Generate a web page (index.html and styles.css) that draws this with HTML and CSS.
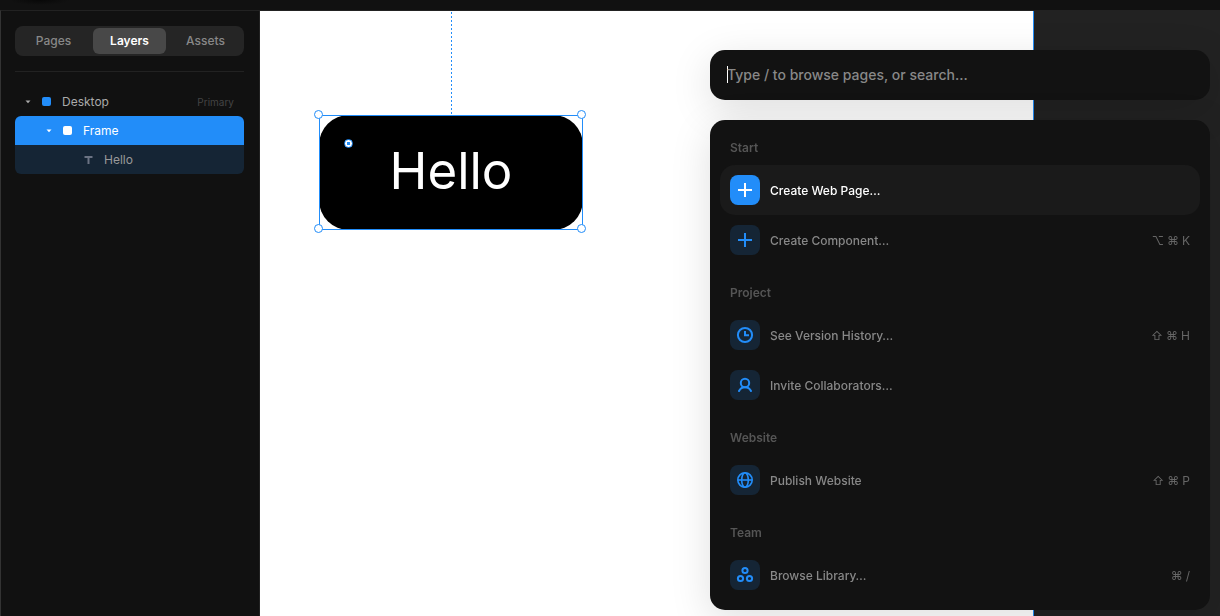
FILE: index.html
```html
<!DOCTYPE html>
<html lang="en">
<head>
<meta charset="utf-8">
<title>Editor</title>
<meta name="viewport" content="width=device-width, initial-scale=1">
<link rel="stylesheet" href="styles.css">
</head>
<body>
<div class="app">
  <header class="toolbar"></header>
  <div class="workspace">
    <aside class="sidebar">
      <nav class="tabs" aria-label="Panels">
        <button class="tab" type="button">Pages</button>
        <button class="tab tab-active" type="button">Layers</button>
        <button class="tab" type="button">Assets</button>
      </nav>
      <ul class="tree">
        <li>
          <button class="layer" type="button">
            <svg class="caret" viewBox="0 0 6 4" aria-hidden="true"><path d="M.5.5h5L3 3.3z"/></svg>
            <span class="swatch"></span>
            <span class="layer-name">Desktop</span>
            <span class="layer-tag">Primary</span>
          </button>
        </li>
        <li>
          <button class="layer layer-selected" type="button">
            <svg class="caret" viewBox="0 0 6 4" aria-hidden="true"><path d="M.5.5h5L3 3.3z"/></svg>
            <span class="swatch"></span>
            <span class="layer-name">Frame</span>
          </button>
        </li>
        <li>
          <button class="layer layer-child" type="button">
            <svg class="type-icon" viewBox="0 0 9 8" aria-hidden="true"><path d="M.5 1h8M4.500 1v7"/></svg>
            <span class="layer-name">Hello</span>
          </button>
        </li>
      </ul>
    </aside>
    <main class="canvas">
      <div class="page">
        <div class="guide"></div>
        <div class="frame">
          <span class="frame-text">Hello</span>
          <span class="radius-handle"></span>
          <div class="selection">
            <i class="handle top left"></i>
            <i class="handle top right"></i>
            <i class="handle bottom left"></i>
            <i class="handle bottom right"></i>
          </div>
        </div>
      </div>
    </main>
  </div>

  <div class="palette" role="dialog" aria-label="Quick actions">
    <input class="search" type="text" aria-label="Search actions" placeholder="Type / to browse pages, or search…" autofocus>
    <div class="results">
      <section class="group">
        <h2 class="group-title">Start</h2>
        <button class="action action-active" type="button">
          <span class="action-icon"><svg viewBox="0 0 30 30" aria-hidden="true"><path d="M15 8v14M8 15h14"/></svg></span>
          <span class="action-name">Create Web Page…</span>
        </button>
        <button class="action" type="button">
          <span class="action-icon"><svg viewBox="0 0 30 30" aria-hidden="true"><path d="M15 8v14M8 15h14"/></svg></span>
          <span class="action-name">Create Component…</span>
          <kbd class="keys"><span>⌥</span><span>⌘</span><span>K</span></kbd>
        </button>
      </section>
      <section class="group">
        <h2 class="group-title">Project</h2>
        <button class="action" type="button">
          <span class="action-icon"><svg viewBox="0 0 30 30" aria-hidden="true"><circle cx="15" cy="15" r="7.100"/><path d="M15 11v4.300h4"/></svg></span>
          <span class="action-name">See Version History…</span>
          <kbd class="keys"><span>⇧</span><span>⌘</span><span>H</span></kbd>
        </button>
        <button class="action" type="button">
          <span class="action-icon"><svg viewBox="0 0 30 30" aria-hidden="true"><circle cx="15" cy="13" r="4.200"/><path d="M9 21c1.200-2.400 3.200-3.800 6-3.800s4.800 1.400 6 3.800" stroke-linecap="round"/></svg></span>
          <span class="action-name">Invite Collaborators…</span>
        </button>
      </section>
      <section class="group">
        <h2 class="group-title">Website</h2>
        <button class="action" type="button">
          <span class="action-icon"><svg class="thin" viewBox="0 0 30 30" aria-hidden="true"><circle cx="15" cy="15" r="7.200"/><ellipse cx="15" cy="15" rx="3.300" ry="7.200"/><path d="M8 15h14"/></svg></span>
          <span class="action-name">Publish Website</span>
          <kbd class="keys"><span>⇧</span><span>⌘</span><span>P</span></kbd>
        </button>
      </section>
      <section class="group">
        <h2 class="group-title">Team</h2>
        <button class="action" type="button">
          <span class="action-icon"><svg viewBox="0 0 30 30" aria-hidden="true"><circle cx="15" cy="10.500" r="2.600"/><circle cx="10.500" cy="18.500" r="2.600"/><circle cx="19.500" cy="18.500" r="2.600"/></svg></span>
          <span class="action-name">Browse Library…</span>
          <kbd class="keys"><span>⌘</span><span>/</span></kbd>
        </button>
      </section>
    </div>
  </div>
</div>
</body>
</html>
```

FILE: styles.css
```css
* { box-sizing: border-box; }

body {
  margin: 0;
  background: #111;
  color: #999;
  font: 500 12px/16px Inter, "Liberation Sans", sans-serif;
}

button {
  margin: 0;
  padding: 0;
  border: 0;
  background: none;
  color: inherit;
  font: inherit;
  text-align: left;
  cursor: pointer;
}

.app {
  position: relative;
  display: flex;
  flex-direction: column;
  height: 100vh;
  overflow: hidden;
}

.toolbar {
  flex: none;
  height: 10px;
  background: radial-gradient(30px 5px at 40px 0, #080808, #111);
}

.workspace { flex: 1; display: flex; min-height: 0; }

/* Sidebar */
.sidebar {
  flex: none;
  width: 260px;
  padding: 15px 15px 0 14px;
  background: #111;
  border: 1px solid #222;
  border-left-color: #333;
  border-bottom: 0;
}

.tabs {
  display: grid;
  grid-template-columns: repeat(3, 1fr);
  gap: 3px;
  height: 30px;
  padding: 2px;
  border-radius: 8px;
  background: #252525;
}

.tab { border-radius: 6px; color: #888; text-align: center; }
.tab-active { background: #484848; color: #fff; font-weight: 600; }

.tree {
  margin: 15px 0 0;
  padding: 15px 0 0;
  border-top: 1px solid #222;
  list-style: none;
}

.layer {
  display: flex;
  align-items: center;
  width: 100%;
  height: 29px;
  padding: 0 10px;
  color: #aaa;
  font-weight: 400;
}

.layer-selected {
  padding-left: 31px;
  border-radius: 6px 6px 0 0;
  background: #228df9;
  color: #fff;
}

.layer-child {
  padding-left: 69px;
  border-radius: 0 0 6px 6px;
  background: #152535;
  color: #999;
}

.caret { width: 6px; height: 4px; margin-right: 11px; fill: currentColor; }
.swatch { width: 9px; height: 9px; margin-right: 11px; border-radius: 2px; background: #228df9; }
.layer-selected .swatch { background: #fff; }
.type-icon { width: 9px; height: 8px; margin-right: 11px; fill: none; stroke: #6b7383; stroke-width: 2; }
.layer-name { flex: 1; }
.layer-tag { color: #444; font-size: 10px; }

/* Canvas */
.canvas { flex: 1; min-width: 0; background: #222; padding-top: 1px; }

.page {
  position: relative;
  width: 774px;
  height: 100%;
  background: #fff;
  border-right: 1px solid #228df9;
}

.guide {
  position: absolute;
  top: 1px;
  left: 191px;
  width: 1px;
  height: 103px;
  background: repeating-linear-gradient(#228df9 0 2px, transparent 2px 4px);
}

.frame {
  position: absolute;
  top: 104px;
  left: 59px;
  display: flex;
  align-items: center;
  justify-content: center;
  width: 264px;
  height: 115px;
  padding-bottom: 4px;
  border-radius: 30px;
  background: #000;
}

.frame-text { color: #fff; font-size: 51px; line-height: 64px; font-weight: 400; }

.radius-handle {
  position: absolute;
  top: 24px;
  left: 25px;
  width: 9px;
  height: 9px;
  border: 1px solid #228df9;
  border-radius: 50%;
  background: radial-gradient(#228df9 0 1.500px, #fff 2px);
}

.selection { position: absolute; inset: 0; border: 1px solid #228df9; }

.handle {
  position: absolute;
  width: 9px;
  height: 9px;
  border: 1px solid #228df9;
  border-radius: 50%;
  background: #fff;
}

.top { top: -6px; }
.bottom { bottom: -4px; }
.left { left: -6px; }
.right { right: -4px; }

/* Command palette */
.palette {
  position: absolute;
  top: 50px;
  right: 10px;
  display: flex;
  flex-direction: column;
  gap: 20px;
  width: 500px;
}

.search,
.results {
  border: 0;
  border-radius: 15px;
  background-color: #121212;
  box-shadow: 0 10px 40px rgba(0, 0, 0, .13);
}

.search {
  width: 100%;
  height: 50px;
  padding: 0 17px 2px;
  outline: 0;
  color: #fff;
  caret-color: transparent;
  font: 500 14px/20px Inter, "Liberation Sans", sans-serif;
}

/* Slim insertion bar in place of the native caret */
.search:placeholder-shown {
  background-image: linear-gradient(#fff, #fff);
  background-position: 17px 16px;
  background-size: 1px 17px;
  background-repeat: no-repeat;
}

.search:not(:placeholder-shown) { caret-color: #fff; }
.search::placeholder { color: #888; opacity: 1; }

.results { display: flex; flex-direction: column; gap: 10px; padding: 10px; }

.group-title {
  margin: 0;
  padding: 0 10px;
  color: #555;
  font-size: 12px;
  line-height: 35px;
  font-weight: 600;
}

.action {
  display: flex;
  align-items: center;
  gap: 10px;
  width: 100%;
  height: 50px;
  padding: 0 10px;
  border-radius: 15px;
  color: #888;
  line-height: 18px;
}

.action-active { background: #1a1a1a; color: #fff; }

.action-icon {
  width: 30px;
  height: 30px;
  border-radius: 8px;
  background: #152535;
  color: #228df9;
}

.action-active .action-icon { background: #228df9; color: #fff; }

.action-icon svg {
  display: block;
  fill: none;
  stroke: currentColor;
  stroke-width: 2;
}

.action-icon .thin { stroke-width: 1.600; }
.action-name { flex: 1; padding-top: 2px; }

.keys {
  display: flex;
  gap: 3px;
  padding-top: 2px;
  color: #666;
  font: inherit;
  font-weight: 400;
}
```
